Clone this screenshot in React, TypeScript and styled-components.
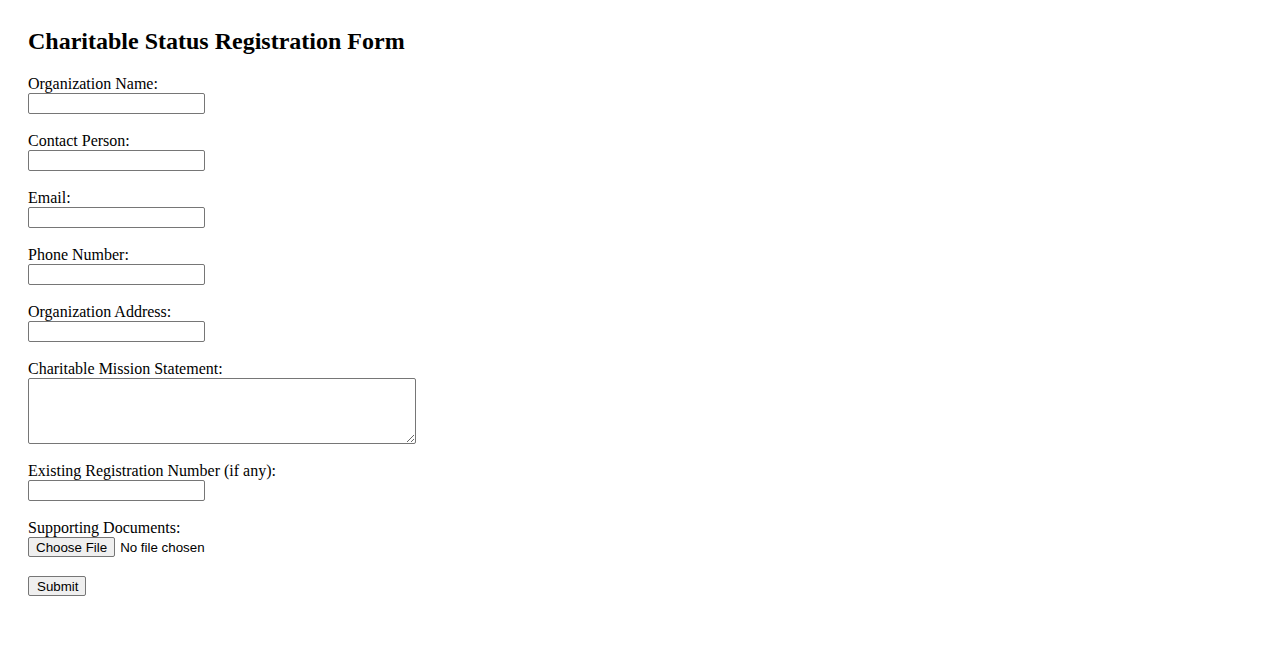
import React from "react";
import styled, { createGlobalStyle } from "styled-components";

const GlobalStyle = createGlobalStyle`
  html, body {
    margin: 0;
    padding: 0;
    background: #ffffff;
  }
  body {
    font-family: "Liberation Serif", "Times New Roman", serif;
    color: #000000;
  }
`;

const Page = styled.main`
  padding: 27px 28px 40px;
`;

const Title = styled.h2`
  margin: 0 0 20px;
  font-family: "Liberation Serif", "Times New Roman", serif;
  font-size: 24px;
  font-weight: bold;
  line-height: 28px;
`;

const Form = styled.form`
  display: flex;
  flex-direction: column;
  align-items: flex-start;
`;

const Field = styled.div`
  display: flex;
  flex-direction: column;
  align-items: flex-start;
  margin-bottom: 18px;
`;

const Label = styled.label`
  font-size: 16px;
  line-height: 18px;
  height: 18px;
`;

const TextInput = styled.input`
  box-sizing: border-box;
  width: 177px;
  height: 21px;
  margin: 0;
  padding: 1px 2px;
  border: 1px solid #767676;
  border-radius: 2px;
  font-family: "Liberation Sans", Arial, sans-serif;
  font-size: 13.333px;
  background: #ffffff;
`;

const TextArea = styled.textarea`
  box-sizing: border-box;
  width: 388px;
  height: 66px;
  margin: 0;
  padding: 2px;
  border: 1px solid #767676;
  border-radius: 2px;
  font-family: "Liberation Mono", monospace;
  font-size: 13.333px;
  background: #ffffff;
`;

const FileInput = styled.input`
  margin: 0;
  height: 21px;
  font-family: "Liberation Sans", Arial, sans-serif;
  font-size: 13.333px;
  color: #000;

  &::file-selector-button {
    box-sizing: border-box;
    height: 20px;
    margin: 0 5px 0 0;
    padding: 1px 7px;
    border: 1px solid #767676;
    border-radius: 2px;
    background: #efefef;
    font-family: "Liberation Sans", Arial, sans-serif;
    font-size: 13.333px;
    color: #000;
  }
`;

const SubmitButton = styled.button`
  box-sizing: border-box;
  height: 20px;
  margin: 0;
  padding: 1px 7px 1px 8px;
  border: 1px solid #767676;
  border-radius: 2px;
  background: #efefef;
  font-family: "Liberation Sans", Arial, sans-serif;
  font-size: 13.333px;
  color: #000;
`;

const fields = [
  { id: "orgName", label: "Organization Name:", type: "text" },
  { id: "contact", label: "Contact Person:", type: "text" },
  { id: "email", label: "Email:", type: "email" },
  { id: "phone", label: "Phone Number:", type: "tel" },
  { id: "address", label: "Organization Address:", type: "text" },
];

export default function App() {
  return (
    <>
      <GlobalStyle />
      <Page>
        <Title>Charitable Status Registration Form</Title>
        <Form onSubmit={(e) => e.preventDefault()}>
          {fields.map((f) => (
            <Field key={f.id}>
              <Label htmlFor={f.id}>{f.label}</Label>
              <TextInput id={f.id} type={f.type} />
            </Field>
          ))}
          <Field>
            <Label htmlFor="mission">Charitable Mission Statement:</Label>
            <TextArea id="mission" />
          </Field>
          <Field>
            <Label htmlFor="regNum">Existing Registration Number (if any):</Label>
            <TextInput id="regNum" type="text" />
          </Field>
          <Field>
            <Label htmlFor="docs">Supporting Documents:</Label>
            <FileInput id="docs" type="file" />
          </Field>
          <SubmitButton type="submit">Submit</SubmitButton>
        </Form>
      </Page>
    </>
  );
}
